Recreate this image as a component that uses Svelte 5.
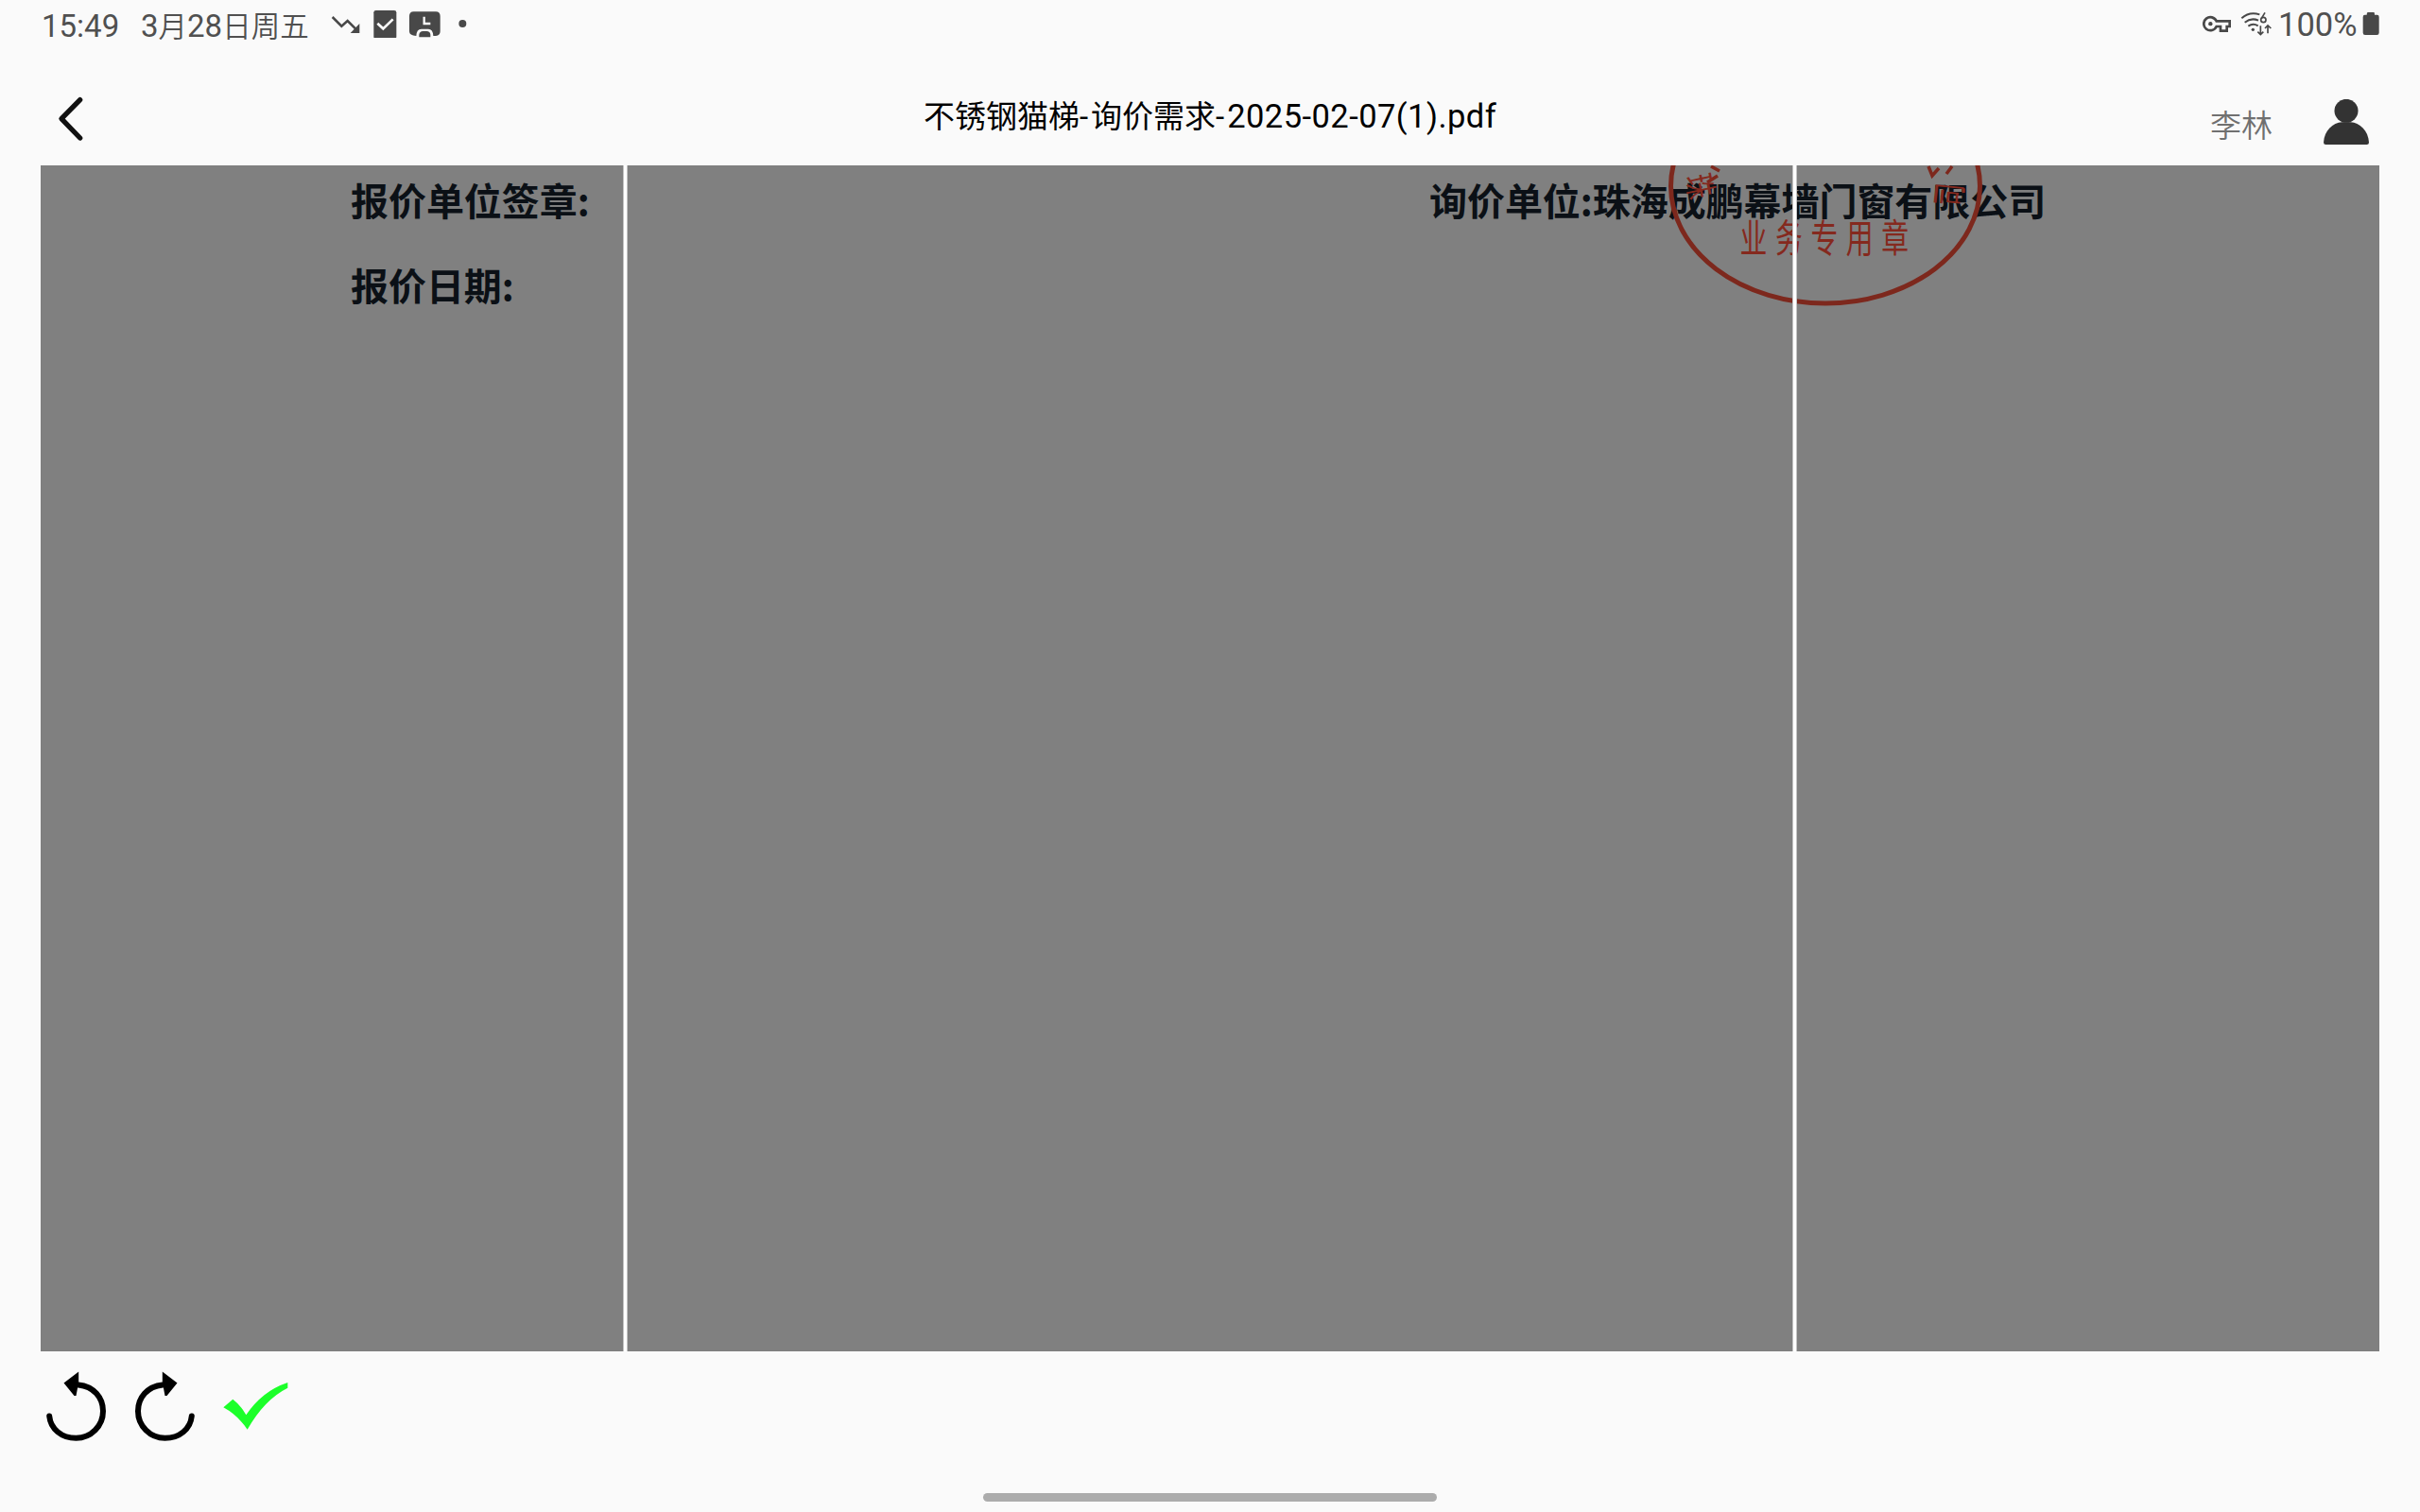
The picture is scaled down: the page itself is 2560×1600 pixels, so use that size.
<script>
  const user = '李林';
  const sealChars = ['业', '务', '专', '用', '章'];
</script>

<div class="screen">
  <div class="status">
    <div class="status-left">
      <span class="clock">15:49</span>
      <span class="date">3<b>月</b>28<b>日周五</b></span>
      <svg class="notif" width="150" height="40" viewBox="0 0 450 120">
        <path d="M14 54 L43 83 L62 66 L94 98" fill="none" stroke="#484848" stroke-width="7.500" />
        <path d="M100 75 V105 H71 Z" fill="#484848" />
        <rect x="145" y="33" width="72" height="90" rx="7" fill="#484848" />
        <path d="M157 74 L175 91 L206 61" fill="none" stroke="#fafafa" stroke-width="8" />
        <path d="M272 37 H342 Q356 37 356 51 V100 Q356 112 342 114 H334 Q333 92 318 92 H296 Q281 92 280 114 Q258 113 258 100 V51 Q258 37 272 37 Z" fill="#484848" />
        <path d="M305 53 V75 H325" fill="none" stroke="#fafafa" stroke-width="7" />
        <path d="M289 118 V110 Q291 99 301 99 H313 Q324 99 325 110 V118 Z" fill="#484848" />
        <circle cx="427" cy="75" r="12" fill="#484848" />
      </svg>
    </div>
    <div class="status-right">
      <svg class="sys" width="76" height="40" viewBox="0 0 228 120">
        <path d="M44 67 A21 21 0 1 0 44 84 H57 V98 H77 V84 H86 V67 Z" fill="none" stroke="#484848" stroke-width="8" />
        <circle cx="25" cy="75.500" r="6.500" fill="#484848" />
        <g fill="none" stroke="#484848" stroke-width="6">
          <path d="M124 58 Q148 36 181 46" />
          <path d="M134 71 Q154 55 177 65" />
          <path d="M145 83 Q160 72 176 82" />
          <circle cx="193" cy="63" r="8" stroke-width="5" />
          <path d="M198 40 L187 58" stroke-width="5" />
          <path d="M184 82 V110 M175 101 L184 110 L193 101" stroke-width="5" />
          <path d="M207 106 V82 M198 90 L207 81 L217 90" stroke-width="5" />
        </g>
        <circle cx="160" cy="94" r="5" fill="#484848" />
      </svg>
      <span class="percent">100%</span>
      <svg class="battery" width="18" height="40" viewBox="0 0 54 120">
        <path d="M15 39 H37 Q39 39 39 47 H47 Q53 47 53 54 V104 Q53 111 46 111 H9 Q2 111 2 104 V54 Q2 47 8 47 H14 Q14 39 17 39 Z" fill="#484848" />
      </svg>
    </div>
  </div>

  <header class="header">
    <button class="back" aria-label="返回">
      <svg width="30" height="50" viewBox="0 0 90 150">
        <path d="M77 17 L18 77 L77 138" fill="none" stroke="#111" stroke-width="16" stroke-linecap="round" stroke-linejoin="round" />
      </svg>
    </button>
    <h1 class="title">不锈钢猫梯<i>-</i>询价需求<i>-</i><span>2025-02-07(1).pdf</span></h1>
    <div class="account">
      <span class="name">{user}</span>
      <svg width="48" height="48" viewBox="0 0 144 144">
        <circle cx="72" cy="37" r="37.500" fill="#333" />
        <path d="M0 137 C2 100 30 74 58 73 H86 C114 74 142 100 144 137 Q144 144 137 144 H7 Q0 144 0 137 Z" fill="#333" />
      </svg>
    </div>
  </header>

  <main class="viewer">
    <div class="page">
      <div class="party">
        <p>报价单位签章:</p>
        <p>报价日期:</p>
      </div>
      <div class="party">
        <p>询价单位:珠海成鹏幕墙门窗有限公司</p>
      </div>
    </div>
    <svg class="seal" width="340" height="155" viewBox="1760 175 340 155">
      <g fill="none" stroke="#7d281d">
        <ellipse cx="1931" cy="197" rx="163.500" ry="124" stroke-width="5" />
        <g stroke-width="3.500">
          <path d="M1810 176 L1819 181 M1806 193 L1817 186" />
          <path d="M2040 176 L2044 186 L2051 178 M2065 176 L2059 184" />
        </g>
      </g>
      <g class="seal-text">
        <text transform="translate(1798 197) rotate(78) scale(0.66 0.9)" text-anchor="middle" dy="14">珠</text>
        <text transform="translate(2062 206) rotate(-84) scale(0.62 0.95)" text-anchor="middle" dy="14">司</text>
        {#each sealChars as ch, i}
          <text transform="translate({1855 + i * 37.4} 267) scale(0.74 1.05)" text-anchor="middle">{ch}</text>
        {/each}
      </g>
    </svg>
    <i class="guide first"></i>
    <i class="guide second"></i>
  </main>

  <footer class="tools">
    <svg width="64" height="78" viewBox="0 0 64 78">
      <path d="M35 16.500 C51 18 61 30 61 44.300 A28.500 28.500 0 0 1 32.500 72.800 C17 72.800 5.500 63 4.200 49.500" fill="none" stroke="#000" stroke-width="6" stroke-linecap="round" />
      <path d="M19.500 14.500 L35.200 2.500 V13.500 L32.500 28 H30.500 Z" fill="#000" />
    </svg>
    <svg width="64" height="78" viewBox="0 0 64 78">
      <g transform="translate(64 0) scale(-1 1)">
        <path d="M35 16.500 C51 18 61 30 61 44.300 A28.500 28.500 0 0 1 32.500 72.800 C17 72.800 5.500 63 4.200 49.500" fill="none" stroke="#000" stroke-width="6" stroke-linecap="round" />
        <path d="M19.500 14.500 L35.200 2.500 V13.500 L32.500 28 H30.500 Z" fill="#000" />
      </g>
    </svg>
    <svg class="ok" width="70" height="52" viewBox="0 0 210 156">
      <path d="M1 82 L31 56 Q55 74 73 106 Q124 30 205 3 V20 Q131 57 77 152 Q47 107 1 82 Z" fill="#1cff2a" />
    </svg>
  </footer>
  <div class="nav"><div class="pill"></div></div>
</div>

<style>
  :global(body) { margin: 0; background: #fafafa; }
  .screen {
    width: 2560px; height: 1600px; display: flex; flex-direction: column;
    background: #fafafa; overflow: hidden;
    font-family: Roboto, "Noto Sans CJK SC", sans-serif;
  }
  .screen > * { flex: none; box-sizing: border-box; }
  svg { display: block; flex: none; }
  .status { height: 54px; display: flex; justify-content: space-between; color: #505050; font-weight: 400; }
  .status-left { display: flex; padding-left: 44px; font-size: 33px; line-height: 56px; white-space: nowrap; }
  .clock { width: 105px; }
  .date { width: 198px; }
  .date b { font-size: 30.5px; font-weight: 350; }
  .status-right { display: flex; padding-right: 43px; font-size: 34.5px; line-height: 53px; }
  .percent { width: 93px; padding-left: 4px; box-sizing: border-box; white-space: nowrap; }
  .header { height: 121px; display: grid; grid-template-columns: 1fr auto 1fr; }
  .back { border: 0; padding: 46px 0 0 59px; background: none; justify-self: start; align-self: start; }
  .title { margin: 0; font-size: 33px; font-weight: 400; line-height: 38px; padding-top: 50px; color: #000; white-space: nowrap; }
  .title i { font-style: normal; letter-spacing: 3px; }
  .title span { font-size: 34.5px; letter-spacing: 0.45px; }
  .account { justify-self: end; display: flex; padding: 51px 54px 0 0; gap: 54px; }
  .name { font-size: 33px; line-height: 58px; color: #707070; font-weight: 350; }
  .viewer { position: relative; width: 2474px; height: 1255px; margin-left: 43px; background: #808080; overflow: hidden; }
  .page { display: grid; grid-template-columns: 1141px 1fr; padding: 0 0 0 328px; }
  .party p { margin: 0; height: 90px; padding-top: 6px; box-sizing: border-box; font: 700 40px/60px "Noto Sans CJK SC", sans-serif; letter-spacing: -0.05px; color: #0b1016; white-space: nowrap; }
  .seal { position: absolute; left: 1717px; top: 0; }
  .seal-text { font: 400 39px "Noto Sans CJK SC", sans-serif; fill: #85291e; }
  .guide { position: absolute; top: 0; bottom: 0; width: 3px; background: #fff; border: solid #c4c4c4; border-width: 0 1px; }
  .first { left: 616px; }
  .second { left: 1853px; }
  .tools { display: flex; height: 138px; padding: 19px 0 0 48px; gap: 31px; }
  .ok { margin: 13px 0 0 -2px; }
  .nav { display: flex; justify-content: center; padding-top: 12px; }
  .pill { width: 480px; height: 9px; border-radius: 5px; background: #acacac; }
</style>
